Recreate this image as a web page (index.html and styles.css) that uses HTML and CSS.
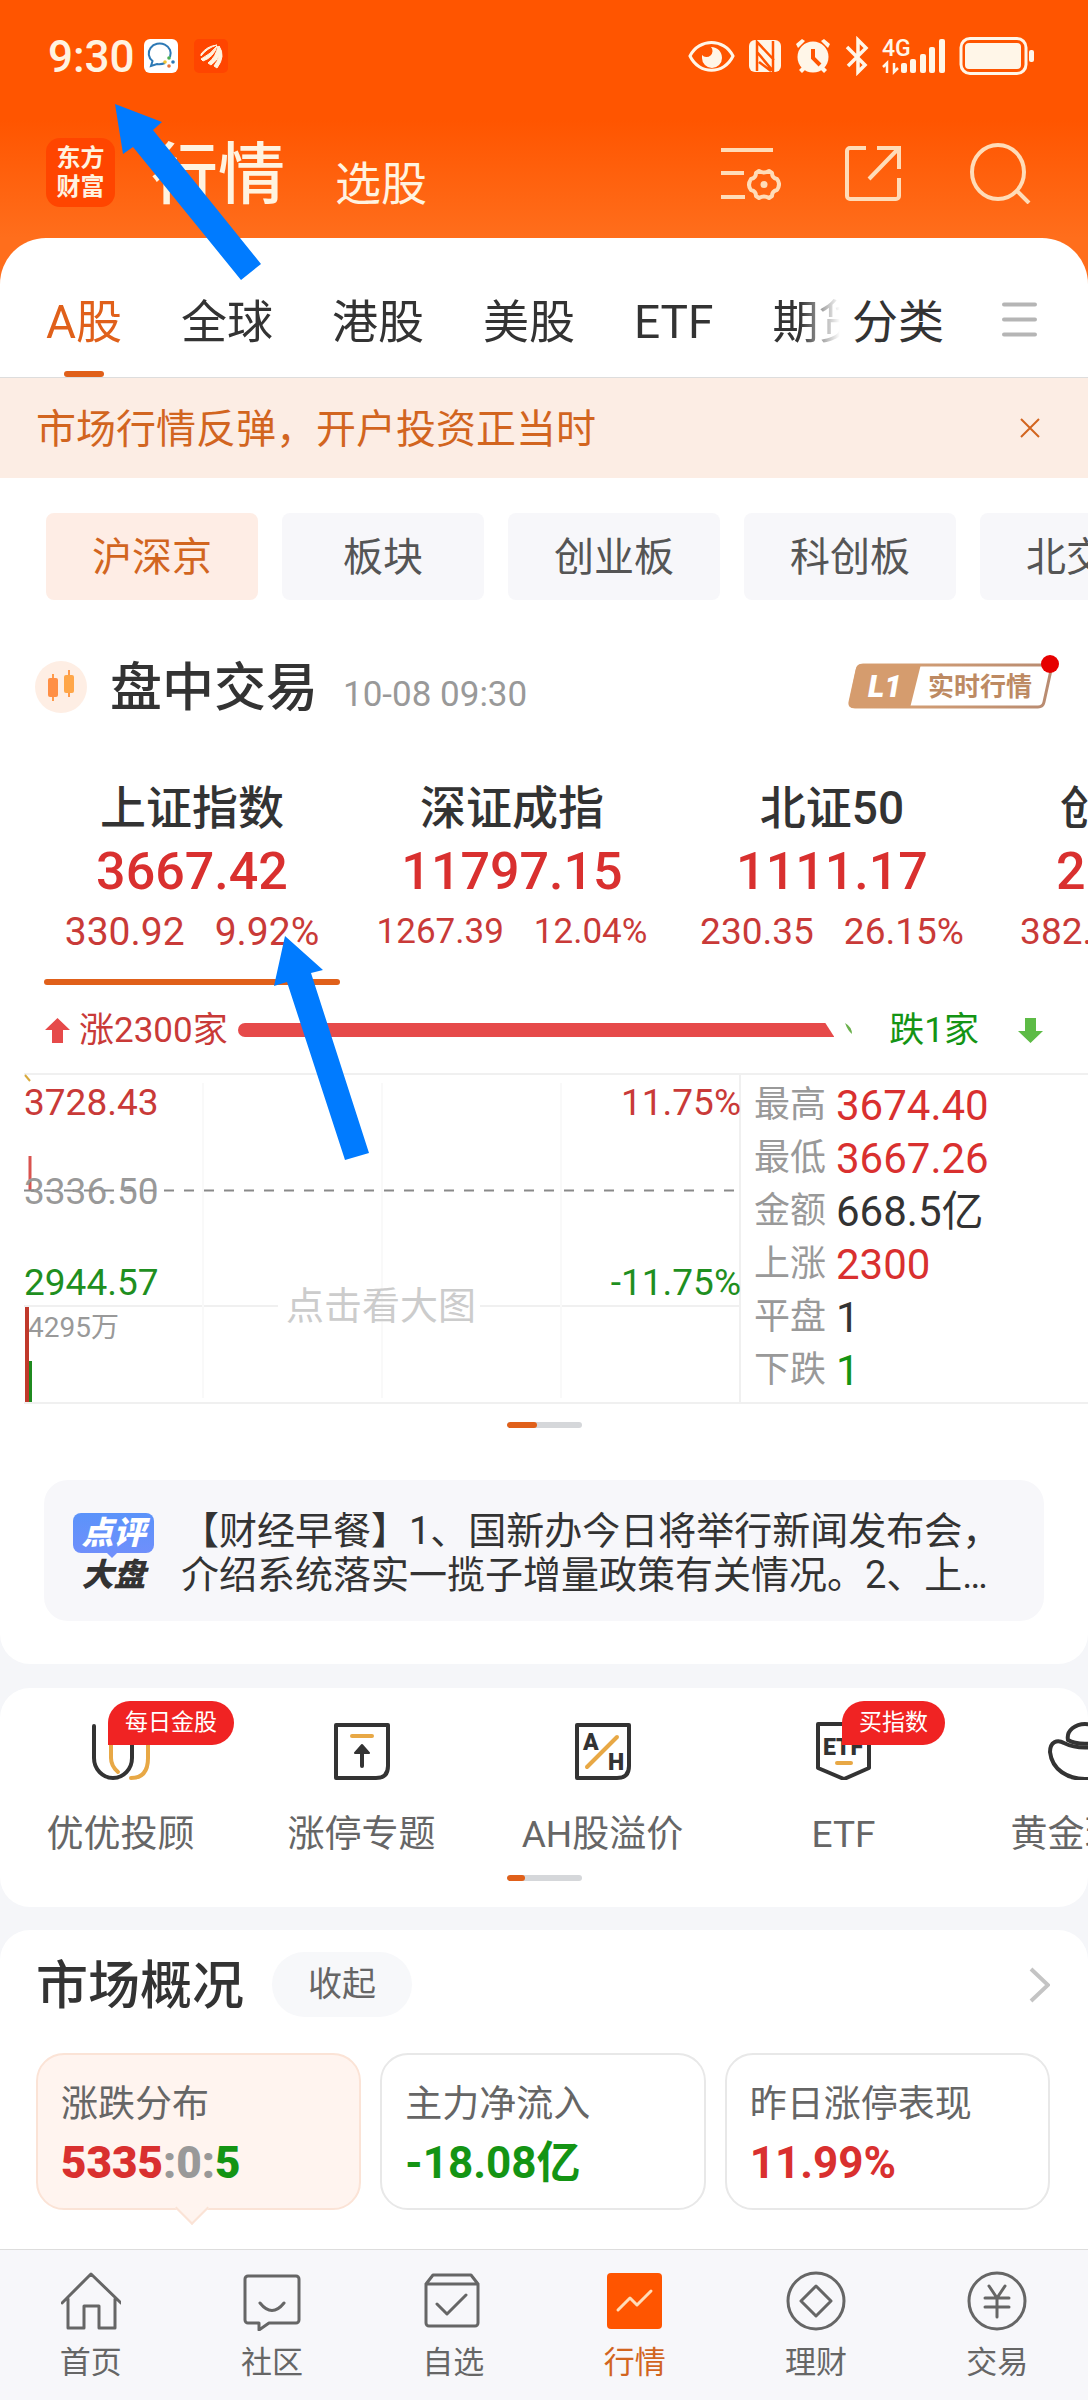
FILE: index.html
```html
<!DOCTYPE html>
<html lang="zh-CN">
<head>
<meta charset="utf-8">
<meta name="viewport" content="width=device-width">
<title>行情</title>
<link rel="stylesheet" href="styles.css">
</head>
<body>
<header class="top">
  <div class="status">
    <span class="clock">9:30</span>
    <svg class="app-chat" width="34" height="34" viewBox="0 0 34 34"><rect width="34" height="34" rx="6" fill="#fff"/><path d="M21 24a12 10 0 0 1-8 1l-6 2 1.500-5A11 10 0 1 1 26 18" fill="none" stroke="#2d79b5" stroke-width="2"/><circle cx="25" cy="19" r="1.800" fill="#4caf50"/><circle cx="21" cy="23" r="1.800" fill="#f4c430"/><circle cx="29" cy="23" r="1.800" fill="#2d79b5"/><circle cx="25" cy="27" r="1.800" fill="#e8743b"/></svg>
    <svg class="app-fan" width="34" height="34" viewBox="0 0 34 34"><rect width="34" height="34" rx="5" fill="#ff4500"/><path d="M7 15Q13 7 23 6Q13 9 7 17ZM7 20Q17 15 23 7Q20 18 9 22ZM14 24Q22 18 24 7Q29 17 17 26ZM20 27Q27 18 25 7Q32 17 23 29Z" fill="#fff3e0" stroke="#fff3e0"/></svg>
    <div class="signals">
      <svg width="348" height="40" viewBox="686 36 348 40" role="img" aria-label="4G">
        <g fill="none" stroke="#fff6e8" stroke-width="3">
          <path d="M690 56C699 38 724 38 733 56C724 75 699 75 690 56Z"/>
          <rect x="961" y="38.500" width="65" height="35" rx="9"/>
        </g>
        <g fill="#fff6e8">
          <path d="M711 47a5 5 0 0 1-9 8v3a10 10 0 0 0 20 0c0-6-4-11-11-11Z"/>
          <rect x="749" y="40" width="32" height="32" rx="6"/>
          <circle cx="813" cy="57" r="15.500"/>
          <path d="M796 44l6-5 3 2-7 7zM830 44l-6-5-3 2 7 7zM799 70l4-4 3 3-4 4zM827 70l-4-4-3 3 4 4z"/>
          <rect x="901" y="63" width="6" height="10" rx="2"/><rect x="910" y="59" width="6" height="14" rx="2"/><rect x="920" y="54" width="6" height="19" rx="2"/><rect x="929" y="47" width="6" height="26" rx="2"/><rect x="939" y="39" width="6" height="34" rx="2"/>
          <rect x="965" y="43" width="56" height="26" rx="4"/><rect x="1029" y="50" width="5" height="12" rx="2"/>
        </g>
        <path d="M757 71V42L774 60M773 41V71L757 52M759 62l12 9" fill="none" stroke="#ff5500" stroke-width="2.500"/>
        <path d="M813 49v9l7 7" fill="none" stroke="#ff5500" stroke-width="4"/>
        <path d="M847 47l18 18-7 7V40l8 8-18 18" fill="none" stroke="#fff6e8" stroke-width="3.500"/>
        <path d="M883 67l4-4v10M898 68l-4 4V63" fill="none" stroke="#fff6e8" stroke-width="2.500"/>
        <text x="882" y="56" class="net">4G</text>
      </svg>
    </div>
  </div>
  <div class="brand-row">
    <a class="logo" href="#"><span>东方</span><span>财富</span></a>
    <h1>行情</h1>
    <a class="pick" href="#">选股</a>
    <div class="tools">
      <button aria-label="设置列表"><svg width="62" height="62" viewBox="-1 4 62 62" fill="none" stroke="#ffdcb8" stroke-width="4"><path d="M1 12H53M1 35H24M1 59H25"/><path stroke-linejoin="round" d="M39 33q5 3 10 0l3 2q0 5 5 6q4 5 0 11q-5 1-5 6l-3 2q-5-3-10 0l-3-2q0-5-5-6q-4-5 0-11q5-1 5-6z"/><circle cx="44" cy="46.500" r="3.500" fill="#ffdcb8" stroke="none"/></svg></button>
      <button aria-label="分享"><svg width="62" height="62" viewBox="1 4 62 62" fill="none" stroke="#ffdcb8" stroke-width="4"><path d="M23 10H7a3 3 0 0 0-3 3V58a3 3 0 0 0 3 3H53a3 3 0 0 0 3-3V40M34 10H56V31M56 10L26 41"/></svg></button>
      <button aria-label="搜索"><svg width="62" height="62" viewBox="0 0 62 62" fill="none" stroke="#ffdcb8" stroke-width="4"><ellipse cx="29" cy="30" rx="26" ry="27"/><path d="M48 49L60 61"/></svg></button>
    </div>
  </div>
</header>

<main>
<section class="panel first">
  <nav class="tabs">
    <div class="tab-strip">
      <a class="on" href="#">A股</a><a href="#">全球</a><a href="#">港股</a><a href="#">美股</a><a href="#">ETF</a><a href="#">期货</a>
    </div>
    <a href="#">分类</a>
    <button aria-label="菜单"><svg width="35" height="35" viewBox="0 0 35 35" stroke="#b5b5b5" stroke-width="4" stroke-linecap="round"><path d="M2 2.500H33M2 17.500H33M2 32.500H33"/></svg></button>
  </nav>

  <div class="banner">
    <p>市场行情反弹，开户投资正当时</p>
    <button aria-label="关闭"><svg width="22" height="22" viewBox="0 0 22 22" stroke="#d2651f" stroke-width="2"><path d="M2 2L20 20M20 2L2 20"/></svg></button>
  </div>

  <div class="chips">
    <button class="on">沪深京</button><button>板块</button><button>创业板</button><button>科创板</button><button>北交所</button>
  </div>

  <div class="session">
    <svg width="52" height="52" viewBox="0 0 52 52"><circle cx="26" cy="26" r="26" fill="#feeee4"/><path d="M18 13v27M34 9v27" stroke="#ff9a4a" stroke-width="2"/><rect x="13" y="17" width="10" height="19" rx="2" fill="#ff8f45"/><rect x="29" y="14" width="10" height="18" rx="2" fill="#ffa648"/></svg>
    <h2>盘中交易</h2>
    <time>10-08 09:30</time>
    <button class="level" aria-label="L1 实时行情">
      <svg width="212" height="56" viewBox="0 0 212 56">
        <defs><linearGradient id="bronze"><stop offset="0" stop-color="#dda575"/><stop offset="1" stop-color="#b88b71"/></linearGradient></defs>
        <path d="M15 11H198q6 0 5 5l-7 32q-1 5-6 5H7q-6 0-5-5L9 16q1-5 6-5Z" fill="none" stroke="url(#bronze)" stroke-width="3"/>
        <path d="M14 10H73L62 54H6q-6 0-5-6L8 15q1-5 6-5Z" fill="#d59c6e"/>
        <text x="20" y="43" class="l1">L1</text>
        <text x="80" y="42" class="rt">实时行情</text>
        <circle cx="202" cy="10" r="9" fill="#e60000"/>
      </svg>
    </button>
  </div>

  <div class="indices">
    <a class="index on" href="#"><b>上证指数</b><strong>3667.42</strong><span class="delta large"><i>330.92</i><i>9.92%</i></span></a>
    <a class="index" href="#"><b>深证成指</b><strong>11797.15</strong><span class="delta small"><i>1267.39</i><i>12.04%</i></span></a>
    <a class="index" href="#"><b>北证50</b><strong>1111.17</strong><span class="delta"><i>230.35</i><i>26.15%</i></span></a>
    <a class="index" href="#"><b>创业板指</b><strong>2550.28</strong><span class="delta"><i>382.99</i><i>17.67%</i></span></a>
  </div>

  <div class="breadth">
    <svg width="25" height="25" viewBox="0 0 25 25"><path d="M12.500 0L25 12H18V25H7V12H0Z" fill="#e64a4a"/></svg>
    <span class="up">涨2300家</span>
    <div class="ratio"></div>
    <svg class="tick" width="8" height="14" viewBox="0 0 8 14"><path d="M0 0Q7 4 7 11Q3 8 0 0Z" fill="#6ab04c"/></svg>
    <span class="down">跌1家</span>
    <svg width="25" height="25" viewBox="0 0 25 25"><path d="M12.500 25L25 13H18V0H7V13H0Z" fill="#5dbb46"/></svg>
  </div>

  <div class="quote">
    <svg class="chart" viewBox="0 0 741 331" role="img" aria-label="分时图">
      <g stroke="#f0f0f0" stroke-width="2" fill="none"><path d="M24 1H741M24 330H741M740 0V331M24 233H278M480 233H741"/><path stroke="#f9f9f9" d="M203 10V325M382 10V325M561 10V325"/></g>
      <path d="M25 2l5 6" stroke="#d9a93c" stroke-width="2"/>
      <path d="M30 83V118" stroke="#d9534f" stroke-width="3"/>
      <text x="24" y="42" class="red">3728.43</text>
      <text x="24" y="131" class="grey">3336.50</text>
      <text x="24" y="222" class="green">2944.57</text>
      <text x="741" y="42" class="red end">11.75%</text>
      <text x="741" y="222" class="green end">-11.75%</text>
      <text x="28" y="264" class="vol">4295万</text>
      <text x="286" y="246" class="hint">点击看大图</text>
      <path d="M24 117.500H735" stroke="#8a8a8a" stroke-width="2" stroke-dasharray="10 10"/>
      <path d="M27 234V329" stroke="#c0392b" stroke-width="4"/><path d="M30.500 288V329" stroke="#1f8a1f" stroke-width="3"/>
    </svg>
    <dl class="stats">
      <div><dt>最高</dt><dd class="up">3674.40</dd></div>
      <div><dt>最低</dt><dd class="up">3667.26</dd></div>
      <div><dt>金额</dt><dd>668.5亿</dd></div>
      <div><dt>上涨</dt><dd class="up">2300</dd></div>
      <div><dt>平盘</dt><dd>1</dd></div>
      <div><dt>下跌</dt><dd class="down">1</dd></div>
    </dl>
  </div>
  <div class="pager"><span class="long"></span></div>

  <a class="news" href="#">
    <span class="news-mark"><span class="bubble">点评</span><span class="board">大盘</span></span>
    <p>【财经早餐】1、国新办今日将举行新闻发布会，介绍系统落实一揽子增量政策有关情况。2、上…</p>
  </a>
</section>

<section class="panel shortcuts">
  <div class="short-row">
    <a href="#"><svg width="58" height="58" viewBox="0 0 58 58" fill="none" stroke-width="4" stroke-linecap="round"><path d="M19 14V36Q19 44 26 50M56 14V36Q56 56 39 56" stroke="#e8a845"/><path d="M2 4V36A19 20 0 0 0 40 36V4" stroke="#333"/></svg><span>优优投顾</span><em>每日金股</em></a>
    <a href="#"><svg width="58" height="58" viewBox="0 0 58 58" fill="none" stroke="#333" stroke-width="4" stroke-linejoin="round" stroke-linecap="round"><path d="M3 3H55V44Q55 56 43 56H3Z"/><path d="M29 44V26" /><path d="M22 31L29 23L36 31Z" fill="#333" stroke-width="2"/><path d="M19 14H39" stroke="#e8a845"/></svg><span>涨停专题</span></a>
    <a href="#"><svg width="58" height="58" viewBox="0 0 58 58" fill="none" stroke="#333" stroke-width="4" stroke-linejoin="round" stroke-linecap="round"><path d="M3 3H55V44Q55 56 43 56H3Z"/><path d="M13 45L43 15" stroke="#e8a845"/><text x="9" y="28" class="glyph">A</text><text x="34" y="48" class="glyph">H</text></svg><span>AH股溢价</span></a>
    <a href="#"><svg width="58" height="58" viewBox="0 0 58 58" fill="none" stroke="#333" stroke-width="4" stroke-linejoin="round" stroke-linecap="round"><path d="M3 2H54V46L29 57L3 46Z"/><path d="M22 41H36" stroke="#e8a845"/><text x="8" y="33" class="glyph">ETF</text></svg><span>ETF</span><em>买指数</em></a>
    <a href="#"><svg width="74" height="58" viewBox="0 0 74 58" fill="none" stroke="#333" stroke-width="4"><path d="M20 18C18 8 28 2 37 2S56 8 54 18C46 23 28 23 20 18Z"/><path d="M2 30C2 20 9 17 16 21C28 27 46 27 58 21C65 17 72 20 72 30C70 48 54 57 37 57S4 48 2 30Z"/></svg><span>黄金现货</span></a>
  </div>
  <div class="pager"><span></span></div>
</section>

<section class="panel market">
  <div class="market-head">
    <h2>市场概况</h2>
    <button class="fold">收起</button>
    <a href="#" aria-label="更多"><svg width="22" height="36" viewBox="0 0 22 36" fill="none" stroke="#c4c4c4" stroke-width="4"><path d="M3 2L20 18L3 34"/></svg></a>
  </div>
  <div class="cards">
    <a class="card on" href="#"><span>涨跌分布</span><strong><b class="up">5335</b><b class="flat">:0:</b><b class="down">5</b></strong></a>
    <a class="card" href="#"><span>主力净流入</span><strong class="down">-18.08亿</strong></a>
    <a class="card" href="#"><span>昨日涨停表现</span><strong class="up">11.99%</strong></a>
  </div>
</section>
</main>

<nav class="tabbar">
  <a href="#"><svg viewBox="0 0 60 60"><path d="M1 32L30 3L60 32M7 28V57H23V35H38V57H54V28"/></svg>首页</a>
  <a href="#"><svg viewBox="0 0 60 60"><path d="M6 5H54a3 3 0 0 1 3 3V49a3 3 0 0 1-3 3H27L17 59V52H6a3 3 0 0 1-3-3V8a3 3 0 0 1 3-3ZM18 32q12 15 24 0"/></svg>社区</a>
  <a href="#"><svg viewBox="0 0 60 60"><path d="M3 13H55V52a3 3 0 0 1-3 3H6a3 3 0 0 1-3-3ZM3 13L10 4H48L55 13M14 33L24 43L43 24"/></svg>自选</a>
  <a class="on" href="#"><svg viewBox="0 0 60 60"><rect x="2" y="2" width="55" height="56" rx="4" fill="#ff5500" stroke="none"/><path d="M13 39L25 27L32 34L46 20" stroke="#ffdcb8"/></svg>行情</a>
  <a href="#"><svg viewBox="0 0 60 60"><circle cx="30" cy="30" r="28"/><path d="M30 15L45 30L30 45L15 30Z"/></svg>理财</a>
  <a href="#"><svg viewBox="0 0 60 60"><circle cx="30" cy="30" r="28"/><path d="M22 15L30 27L38 15M30 27V46M18 27H42M18 36H42"/></svg>交易</a>
</nav>

<svg class="pointer one" width="148" height="178" viewBox="0 0 148 178"><path d="M1 1L48 19L39 27L147 161L127 177L19 44L9 51Z" fill="#007bff"/></svg>
<svg class="pointer two" width="97" height="226" viewBox="0 0 97 226"><path d="M12 1L50 35L38 38L96 218L72 225L14 47L1 51Z" fill="#007bff"/></svg>
</body>
</html>
```

FILE: styles.css
```css
* { box-sizing: border-box; margin: 0; padding: 0; }
body {
  position: relative;
  background: #f5f6f9;
  color: #333;
  font-family: Roboto, "Noto Sans CJK SC", sans-serif;
  overflow-x: hidden;
}
a { color: inherit; text-decoration: none; }
button { border: 0; background: none; font: inherit; color: inherit; }
svg { display: block; flex: none; }
i, em { font-style: normal; }
.up { color: #d9302f; }
.down { color: #149414; }
.flat { color: #999; }

/* header */
.top {
  padding: 36px 54px 77px 46px;
  background: linear-gradient(#ff5500 120px, #ff6e1c 238px);
  color: #fff3e0;
}
.status { display: flex; align-items: center; height: 40px; }
.clock { width: 98px; padding: 2px 0 0 2px; font-size: 44px; font-weight: 500; line-height: 40px; }
.app-fan { margin-left: 16px; }
.signals { margin-left: auto; }
.net { font-size: 23px; font-weight: 500; fill: #fff6e8; }
.brand-row { display: flex; align-items: center; margin-top: 62px; height: 69px; }
.logo {
  display: grid;
  align-content: center;
  width: 69px;
  height: 69px;
  border-radius: 14px;
  background: #ff4500;
  font-size: 24px;
  font-weight: 700;
  line-height: 29px;
  text-align: center;
}
h1 { margin-left: 36px; padding-top: 6px; font-size: 67px; font-weight: 500; line-height: 69px; }
.pick { align-self: flex-end; margin-left: 50px; padding-top: 4px; font-size: 46px; line-height: 46px; }
.tools { display: flex; gap: 63px; margin-left: auto; padding-right: 3px; }

/* panels */
.panel { background: #fff; border-radius: 30px; }
.first { margin-top: -46px; padding-bottom: 43px; border-radius: 46px 46px 30px 30px; overflow: hidden; }

.tabs {
  display: flex;
  align-items: stretch;
  height: 140px;
  padding: 0 51px 0 46px;
  border-bottom: 1px solid #ddd;
  font-size: 46px;
  line-height: 86px;
}
.tab-strip {
  display: flex;
  flex: 1;
  gap: 59px;
  padding-top: 41px;
  overflow: hidden;
  white-space: nowrap;
  -webkit-mask-image: linear-gradient(to left, transparent, #000 40px);
  mask-image: linear-gradient(to left, transparent, #000 40px);
}
.tabs > a { margin: 0 58px 0 12px; padding-top: 41px; }
.tabs > button { padding-top: 24px; }
.tabs .on { position: relative; color: #e0601a; }
.tabs .on::after {
  content: "";
  position: absolute;
  left: 18px;
  bottom: 0;
  width: 40px;
  height: 6px;
  border-radius: 3px;
  background: #e0601a;
}

.banner {
  display: flex;
  align-items: center;
  justify-content: space-between;
  padding: 0 47px 0 36px;
  background: #fcede4;
  color: #d2651f;
  font-size: 40px;
}
.banner p { padding-top: 4px; line-height: 96px; }

.chips { display: flex; gap: 24px; padding: 35px 0 0 46px; overflow: hidden; }
.chips button {
  flex: none;
  padding: 3px 46px 0;
  border-radius: 8px;
  background: #f7f7fa;
  color: #555;
  font-size: 40px;
  line-height: 84px;
}
.chips button:nth-child(2) { padding: 3px 61px 0; }
.chips .on { background: #feede5; color: #d2651f; }

.session { display: flex; align-items: center; margin-top: 61px; padding: 0 28px 0 35px; height: 52px; }
h2 { padding-top: 4px; font-size: 52px; font-weight: 500; line-height: 52px; }
.session h2 { margin-left: 23px; }
.session time { margin: 15px 0 0 25px; color: #999; font-size: 35px; line-height: 40px; }
.level { margin: -10px 0 0 auto; }
.l1 { font-size: 31px; font-weight: 900; font-style: italic; fill: #fff; }
.rt { font-size: 26px; font-weight: 700; fill: #bd8a63; }

.indices { display: flex; margin-top: 63px; padding-left: 32px; overflow: hidden; }
.index {
  position: relative;
  display: flex;
  flex: 0 0 320px;
  flex-direction: column;
  align-items: center;
  padding-top: 2px;
  height: 209px;
}
.index b { font-size: 46px; font-weight: 500; line-height: 60px; }
.index strong { margin-top: 6px; color: #d9302f; font-size: 52px; font-weight: 500; line-height: 56px; }
.delta { display: flex; gap: 30px; margin-top: 12px; color: #c93a38; font-size: 37px; line-height: 40px; }
.delta.small { font-size: 35px; }
.delta.large { font-size: 39px; }
.index.on::after {
  content: "";
  position: absolute;
  left: 12px;
  bottom: 0;
  width: 296px;
  height: 6px;
  border-radius: 3px;
  background: #e0601a;
}

.breadth { display: flex; align-items: center; margin-top: 24px; padding: 0 45px; font-size: 35px; line-height: 40px; }
.breadth .up { margin: 0 10px 0 9px; padding-top: 2px; color: #c93a38; }
.breadth .down { margin: 0 39px 0 36px; padding-top: 2px; }
.ratio {
  flex: 1;
  height: 14px;
  border-radius: 7px 0 0 7px;
  background: #e64a4a;
  clip-path: polygon(0 0, calc(100% - 9px) 0, 100% 100%, 0 100%);
}
.tick { margin-left: 11px; }

.quote { display: grid; grid-template-columns: 741fr 347fr; margin-top: 22px; }
.chart { width: 100%; font-size: 37px; }
.chart .red { fill: #c93a38; }
.chart .grey { fill: #999; }
.chart .green { fill: #1f8f1f; }
.chart .end { text-anchor: end; }
.chart .vol { fill: #999; font-size: 28px; }
.chart .hint { fill: #ccc; font-size: 38px; }
.stats { padding: 4px 0 0 13px; border: solid #f0f0f0; border-width: 2px 0; }
.stats div { display: flex; align-items: center; gap: 10px; line-height: 53px; }
.stats dt { color: #999; font-size: 36px; }
.stats dd { font-size: 42px; }

.pager { width: 75px; height: 6px; margin: 18px auto 0; border-radius: 3px; background: #d5d7da; overflow: hidden; }
.pager span { display: block; width: 18px; height: 6px; border-radius: 3px; background: #e0601a; }
.pager .long { width: 30px; }

.news {
  display: flex;
  align-items: center;
  gap: 27px;
  margin: 52px 44px 0;
  padding: 29px 40px 24px 29px;
  border-radius: 24px;
  background: #f7f7fa;
}
.news p { flex: 1; font-size: 38px; line-height: 44px; }
.news-mark { flex: none; width: 81px; font-style: italic; font-weight: 900; text-align: center; line-height: 40px; }
.bubble { position: relative; display: block; border-radius: 8px; background: linear-gradient(#5b93fa, #6f8ffb); color: #fff; font-size: 32px; }
.bubble::after {
  content: "";
  position: absolute;
  left: 34px;
  top: 40px;
  border: 5px solid transparent;
  border-top-color: #6f8ffb;
}
.board { display: block; margin-top: 4px; font-size: 32px; line-height: 36px; }

.shortcuts { margin-top: 24px; padding: 34px 0 26px; overflow: hidden; }
.short-row { display: flex; }
.short-row a {
  position: relative;
  display: flex;
  flex: 0 0 241px;
  flex-direction: column;
  align-items: center;
  color: #666;
  font-size: 37px;
  line-height: 44px;
}
.short-row span { margin-top: 33px; }
.short-row em {
  position: absolute;
  top: -21px;
  left: 108px;
  padding: 0 17px;
  border-radius: 22px 22px 22px 0;
  background: #f02323;
  color: #fff;
  font-size: 23px;
  line-height: 44px;
}
.short-row a:nth-child(4) em { left: 119px; }
.glyph { font-size: 23px; font-weight: 900; fill: #333; stroke: none; }
.shortcuts .pager { margin-top: 18px; }

.market { margin-top: 23px; padding: 22px 38px 39px 36px; border-radius: 30px 30px 0 0; }
.market-head { display: flex; align-items: center; }
.fold { margin-left: 28px; padding: 0 36px; border-radius: 33px; background: #f7f8fa; color: #666; font-size: 34px; line-height: 65px; }
.market-head a { margin-left: auto; }
.cards { display: grid; grid-template-columns: repeat(3, 1fr); gap: 19px; margin-top: 36px; }
.card {
  position: relative;
  padding: 26px 0 20px 23px;
  border: 2px solid #e8e8e8;
  border-radius: 28px;
}
.card span { display: block; color: #666; font-size: 37px; line-height: 48px; }
.card strong { display: block; margin-top: 9px; font-size: 44px; line-height: 50px; }
.card.on { border-color: #fbe3d6; background: #fff4ef; }
.card.on::after {
  content: "";
  position: absolute;
  left: 142px;
  bottom: -12px;
  width: 22px;
  height: 22px;
  border: solid #fbe3d6;
  border-width: 0 2px 2px 0;
  background: #fff4ef;
  transform: rotate(45deg);
}

/* bottom navigation */
.tabbar {
  display: grid;
  grid-template-columns: repeat(6, 1fr);
  padding: 21px 0 17px;
  border-top: 1px solid #ddd;
  background: #f7f7fa;
  color: #666;
  font-size: 31px;
  line-height: 40px;
}
.tabbar a { display: flex; flex-direction: column; align-items: center; gap: 12px; }
.tabbar svg { width: 60px; height: 60px; fill: none; stroke: #666; stroke-width: 3; stroke-linejoin: round; stroke-linecap: round; }
.tabbar .on { color: #d2651f; }

/* annotation arrows drawn over the page */
.pointer { position: absolute; pointer-events: none; }
.one { left: 114px; top: 103px; }
.two { left: 273px; top: 935px; }
```
